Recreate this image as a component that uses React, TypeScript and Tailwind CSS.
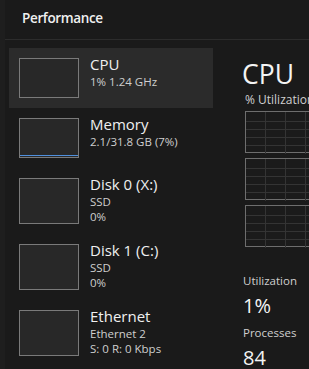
import React from "react";

const font = { fontFamily: '"Open Sans", "Noto Sans", sans-serif' };

type Row = { title: string; lines: string[]; selected?: boolean; memBar?: boolean };

const rows: Row[] = [
  { title: "CPU", lines: ["1% 1.24 GHz"], selected: true },
  { title: "Memory", lines: ["2.1/31.8 GB (7%)"], memBar: true },
  { title: "Disk 0 (X:)", lines: ["SSD", "0%"] },
  { title: "Disk 1 (C:)", lines: ["SSD", "0%"] },
  { title: "Ethernet", lines: ["Ethernet 2", "S: 0 R: 0 Kbps"] },
];

function Graph() {
  return (
    <div className="relative h-[42px] w-[80px] border border-[#6e6e6e] bg-[#1b1b1b] shrink-0">
      <svg className="absolute inset-0" width="80" height="42">
        {[19, 39, 59].map((x) => (
          <line key={x} x1={x + 0.5} y1={0} x2={x + 0.5} y2={42} stroke="#343434" strokeWidth={1} />
        ))}
        {[9, 17, 25, 33].map((y) => (
          <line key={y} x1={0} y1={y + 0.5} x2={80} y2={y + 0.5} stroke="#343434" strokeWidth={1} />
        ))}
      </svg>
    </div>
  );
}

export default function App() {
  return (
    <div className="w-[309px] h-[369px] overflow-hidden bg-[#1a1a1a] flex text-[#e6e6e6]" style={font}>
      <div className="w-[5px] shrink-0 bg-[#1e1e1e]" />
      <div className="flex-1 flex flex-col min-w-0">
        <div className="h-[40px] shrink-0 border-b border-[#2c2c2c] flex items-center pl-[17px] pb-[3px]">
          <span className="text-[13.5px] tracking-[-0.35px] font-semibold text-[#f0f0f0]">Performance</span>
        </div>
        <div className="flex-1 flex min-h-0">
          <div className="w-[208px] shrink-0 pl-[4px] pt-[8px] flex flex-col">
            {rows.map((r) => (
              <div
                key={r.title}
                className={`flex px-[10px] pt-[10px] pb-[10px] gap-[11px] ${r.selected ? "bg-[#2b2b2b]" : ""}`}
              >
                <div
                  className={`relative w-[60px] ${r.lines.length > 1 ? "h-[46px]" : "h-[40px]"} border border-[#7a7a7a] bg-[#282828] shrink-0`}
                >
                  {r.memBar && <div className="absolute left-0 right-0 bottom-[1px] h-[1px] bg-[#4f8fdc]" />}
                </div>
                <div className="flex flex-col -mt-[4px]">
                  <div className="text-[15px] leading-[20px] text-[#f0f0f0]">{r.title}</div>
                  {r.lines.map((l, i) => (
                    <div key={i} className="text-[11.5px] leading-[15px] text-[#cfcfcf]">
                      {l}
                    </div>
                  ))}
                </div>
              </div>
            ))}
          </div>
          <div className="flex-1 min-w-0 pl-[32px] flex flex-col">
            <div className="text-[26.5px] leading-[36px] text-[#f4f4f4] mt-[16px] -ml-[3px]">CPU</div>
            <div className="text-[12px] leading-[14px] text-[#d0d0d0] mt-[1px] whitespace-nowrap">% Utilization</div>
            <div className="flex flex-col gap-[5px] mt-[4px]">
              <Graph />
              <Graph />
              <Graph />
            </div>
            <div className="text-[11.5px] leading-[15px] text-[#cfcfcf] mt-[26px] -ml-[2px]">Utilization</div>
            <div className="text-[20px] leading-[24px] text-[#f4f4f4] mt-[6px] -ml-[2px]">1%</div>
            <div className="text-[11.5px] leading-[15px] text-[#cfcfcf] mt-[7px] -ml-[2px]">Processes</div>
            <div className="text-[20px] leading-[20px] text-[#f4f4f4] mt-[8px] -ml-[2px]">84</div>
          </div>
        </div>
      </div>
    </div>
  );
}
